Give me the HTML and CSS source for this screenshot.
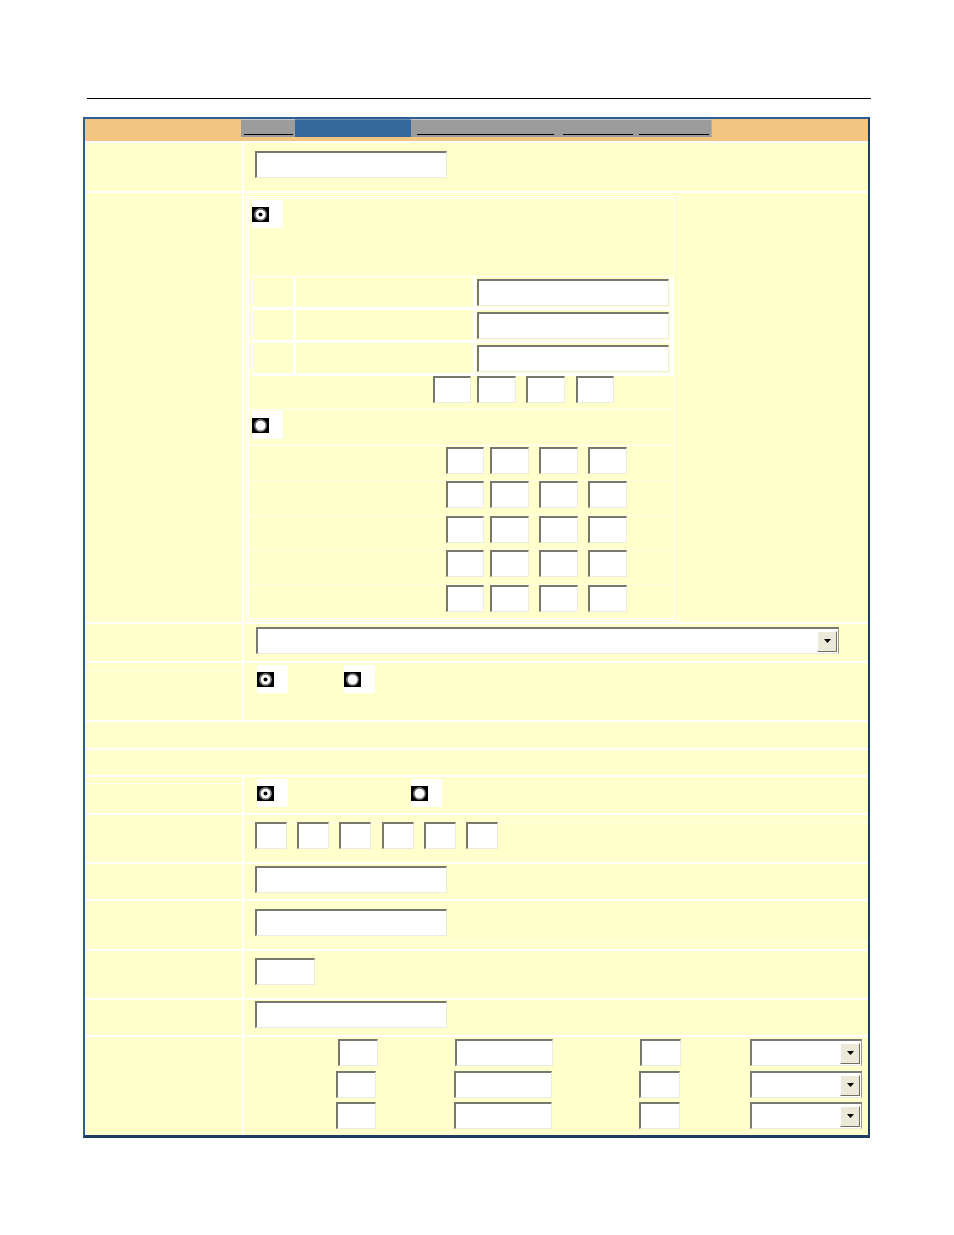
FILE: index.html
```html
<!DOCTYPE html>
<html>
<head>
<meta charset="utf-8">
<link rel="stylesheet" href="styles.css">
</head>
<body>
<div class="page">
  <div class="rule"></div>
  <div class="frame">
    <div class="head">
      <div class="tabs">
        <span class="tab t1"><i class="ul"></i></span>
        <span class="tab active"></span>
        <span class="tab t3"><i class="ul"></i></span>
        <span class="tab t4"><i class="ul"></i></span>
        <span class="tab t5"><i class="ul"></i></span>
      </div>
    </div>

    <div class="lbl"></div>
    <div class="cell c1"><input type="text" class="in w192"></div>

    <div class="lbl"></div>
    <div class="cell c2">
      <div class="nest">
        <div class="nest-in">
          <div class="n-radio-a">
            <span class="radio"><svg width="17" height="15" viewBox="0 0 17 15"><rect width="17" height="15" fill="#000"/><circle cx="8.5" cy="7.5" r="5.6" fill="#fff" stroke="#8a8a8a" stroke-width="1.5"/><path d="M4.5 11.5A5.6 5.6 0 0 1 12.5 3.5" fill="none" stroke="#6e6e6e" stroke-width="1.2"/><circle cx="8.5" cy="7.5" r="2" fill="#000"/></svg></span>
          </div>
          <div class="sub">
            <div class="sc"></div><div class="sc"></div><div class="sc"><input type="text" class="in w192"></div>
            <div class="sc"></div><div class="sc"></div><div class="sc"><input type="text" class="in w192"></div>
            <div class="sc"></div><div class="sc"></div><div class="sc"><input type="text" class="in w192"></div>
          </div>
          <div class="four">
            <input type="text" class="in w38">
            <input type="text" class="in w39">
            <input type="text" class="in w39">
            <input type="text" class="in w38">
          </div>
          <div class="n-radio-b">
            <span class="radio"><svg width="17" height="15" viewBox="0 0 17 15"><rect width="17" height="15" fill="#000"/><circle cx="8.5" cy="7.5" r="5.6" fill="#fff" stroke="#8a8a8a" stroke-width="1.5"/><path d="M4.5 11.5A5.6 5.6 0 0 1 12.5 3.5" fill="none" stroke="#6e6e6e" stroke-width="1.2"/></svg></span>
          </div>
          <div class="grid4">
            <div class="g-row"><input type="text" class="in w38"><input type="text" class="in w39"><input type="text" class="in w39"><input type="text" class="in w39"></div>
            <div class="g-row"><input type="text" class="in w38"><input type="text" class="in w39"><input type="text" class="in w39"><input type="text" class="in w39"></div>
            <div class="g-row"><input type="text" class="in w38"><input type="text" class="in w39"><input type="text" class="in w39"><input type="text" class="in w39"></div>
            <div class="g-row"><input type="text" class="in w38"><input type="text" class="in w39"><input type="text" class="in w39"><input type="text" class="in w39"></div>
            <div class="g-row"><input type="text" class="in w38"><input type="text" class="in w39"><input type="text" class="in w39"><input type="text" class="in w39"></div>
          </div>
        </div>
      </div>
    </div>

    <div class="lbl"></div>
    <div class="cell c3">
      <div class="sel w583"><span class="btn"><svg width="7" height="4" viewBox="0 0 7 4"><path d="M0 0h7L3.5 4z" fill="#000"/></svg></span></div>
    </div>

    <div class="lbl l4"></div>
    <div class="cell c4">
      <span class="radio r-a"><svg width="17" height="15" viewBox="0 0 17 15"><rect width="17" height="15" fill="#000"/><circle cx="8.5" cy="7.5" r="5.6" fill="#fff" stroke="#8a8a8a" stroke-width="1.5"/><path d="M4.5 11.5A5.6 5.6 0 0 1 12.5 3.5" fill="none" stroke="#6e6e6e" stroke-width="1.2"/><circle cx="8.5" cy="7.5" r="2" fill="#000"/></svg></span>
      <span class="radio r-b"><svg width="17" height="15" viewBox="0 0 17 15"><rect width="17" height="15" fill="#000"/><circle cx="8.5" cy="7.5" r="5.6" fill="#fff" stroke="#8a8a8a" stroke-width="1.5"/><path d="M4.5 11.5A5.6 5.6 0 0 1 12.5 3.5" fill="none" stroke="#6e6e6e" stroke-width="1.2"/></svg></span>
    </div>

    <div class="full"></div>
    <div class="full"></div>

    <div class="lbl l7"></div>
    <div class="cell c7">
      <span class="radio r-a"><svg width="17" height="15" viewBox="0 0 17 15"><rect width="17" height="15" fill="#000"/><circle cx="8.5" cy="7.5" r="5.6" fill="#fff" stroke="#8a8a8a" stroke-width="1.5"/><path d="M4.5 11.5A5.6 5.6 0 0 1 12.5 3.5" fill="none" stroke="#6e6e6e" stroke-width="1.2"/><circle cx="8.5" cy="7.5" r="2" fill="#000"/></svg></span>
      <span class="radio r-c"><svg width="17" height="15" viewBox="0 0 17 15"><rect width="17" height="15" fill="#000"/><circle cx="8.5" cy="7.5" r="5.6" fill="#fff" stroke="#8a8a8a" stroke-width="1.5"/><path d="M4.5 11.5A5.6 5.6 0 0 1 12.5 3.5" fill="none" stroke="#6e6e6e" stroke-width="1.2"/></svg></span>
    </div>

    <div class="lbl"></div>
    <div class="cell c8">
      <input type="text" class="in w32">
      <input type="text" class="in w32">
      <input type="text" class="in w32">
      <input type="text" class="in w32 nudge">
      <input type="text" class="in w32">
      <input type="text" class="in w32">
    </div>

    <div class="lbl"></div>
    <div class="cell c9"><input type="text" class="in w192"></div>

    <div class="lbl"></div>
    <div class="cell c10"><input type="text" class="in w192"></div>

    <div class="lbl"></div>
    <div class="cell c11"><input type="text" class="in w60"></div>

    <div class="lbl"></div>
    <div class="cell c12"><input type="text" class="in w192"></div>

    <div class="lbl"></div>
    <div class="cell c13">
      <div class="b-row ra">
        <input type="text" class="in w40 m1">
        <input type="text" class="in w98 m2">
        <input type="text" class="in w41 m3">
        <div class="sel w112 m4"><span class="btn"><svg width="7" height="4" viewBox="0 0 7 4"><path d="M0 0h7L3.5 4z" fill="#000"/></svg></span></div>
      </div>
      <div class="b-row rb">
        <input type="text" class="in w40 m1">
        <input type="text" class="in w98 m2">
        <input type="text" class="in w41 m3">
        <div class="sel w112 m4"><span class="btn"><svg width="7" height="4" viewBox="0 0 7 4"><path d="M0 0h7L3.5 4z" fill="#000"/></svg></span></div>
      </div>
      <div class="b-row rc">
        <input type="text" class="in w40 m1">
        <input type="text" class="in w98 m2">
        <input type="text" class="in w41 m3">
        <div class="sel w112 m4"><span class="btn"><svg width="7" height="4" viewBox="0 0 7 4"><path d="M0 0h7L3.5 4z" fill="#000"/></svg></span></div>
      </div>
    </div>
  </div>
</div>
</body>
</html>
```

FILE: styles.css
```css
html, body {
  margin: 0;
  padding: 0;
  background: #fff;
  font-family: "Liberation Sans", Arial, sans-serif;
  font-size: 13px;
}

.page {
  padding-top: 98px;
  padding-bottom: 96px;
}

.rule {
  margin-left: 87px;
  width: 784px;
  height: 1px;
  background: #000;
}

.frame {
  margin-top: 18px;
  margin-left: 83px;
  width: 787px;
  box-sizing: border-box;
  border-style: solid;
  border-width: 2px 2px 3px 2px;
  border-color: #2e5e91 #1d3d63 #1d3d63 #2e5e91;
  background: #fff;
  display: grid;
  grid-template-columns: 157px 624px;
  grid-template-rows: 22px 48px 429px 37px 57px 26px 25px 36px 47px 35px 48px 47px 35px 98px;
  gap: 2px;
}

/* header with tabs */
.head {
  grid-column: 1 / -1;
  background: #f3c580;
}

.tabs {
  display: flex;
  margin-left: 156px;
  height: 18px;
}

.tab {
  display: block;
  height: 18px;
  box-sizing: border-box;
  background: #9c9c9c;
  border-top: 1px solid #c6c6c6;
}

.tab .ul {
  display: block;
  height: 1px;
  margin-top: 14px;
  background: #000;
}

.t1 { width: 54px; }
.t1 .ul { margin-left: 3px; width: 49px; }
.active {
  width: 116px;
  background: #34679a;
  border-top-color: #6e8fb6;
}
.t3 { width: 147px; }
.t3 .ul { margin-left: 6px; width: 137px; }
.t4 { width: 78px; }
.t4 .ul { margin-left: 5px; width: 70px; }
.t5 { width: 76px; border-right: 1px solid #b0b0b0; }
.t5 .ul { margin-left: 3px; width: 70px; }

/* cells */
.lbl, .cell, .full {
  background: #ffffcc;
  box-sizing: border-box;
}

.full { grid-column: 1 / -1; }

.l4 {
  background: linear-gradient(#fffff2, #fffff2) 0 7px / 100% 1px no-repeat, #ffffcc;
}
.l7 {
  background: linear-gradient(#fffff2, #fffff2) 0 6px / 100% 1px no-repeat, #ffffcc;
}

.c1 { padding: 8px 0 0 11px; }
.c3 { padding: 3px 0 0 12px; }
.c4 { padding: 2px 0 0 13px; display: flex; align-items: flex-start; }
.c7 { padding: 2px 0 0 13px; display: flex; align-items: flex-start; }
.c8 {
  padding: 7px 0 0 11px;
  display: flex;
  align-items: flex-start;
  gap: 10px;
  background: linear-gradient(#fffff0, #fffff0) 0 7px / 100% 1px no-repeat, #ffffcc;
}
.c8 .nudge { margin-left: 1px; }
.c9 { padding: 2px 0 0 11px; }
.c10 {
  padding: 8px 0 0 11px;
  background: linear-gradient(#fffff0, #fffff0) 0 41px / 100% 1px no-repeat, #ffffcc;
}
.c11 { padding: 7px 0 0 11px; }
.c12 { padding: 1px 0 0 11px; }
.c13 { padding: 2px 0 0 0; }

.c4 .r-b { margin-left: 56px; }
.c7 .r-c { margin-left: 123px; }

/* text inputs */
.in {
  -webkit-appearance: none;
  appearance: none;
  display: block;
  box-sizing: border-box;
  height: 27px;
  margin: 0;
  padding: 0;
  background: #fff;
  border-style: solid;
  border-width: 2px 1px 1px 2px;
  border-color: #77776b #ecebe2 #ecebe2 #77776b;
  font: 13px "Liberation Sans", Arial, sans-serif;
  outline: none;
}

.w192 { width: 192px; }
.w98 { width: 98px; }
.w60 { width: 60px; }
.w41 { width: 41px; }
.w40 { width: 40px; }
.w39 { width: 39px; }
.w38 { width: 38px; }
.w32 { width: 32px; }

/* select-like control */
.sel {
  box-sizing: border-box;
  height: 27px;
  background: #fff;
  border-style: solid;
  border-width: 2px 1px 1px 2px;
  border-color: #7a7a72 #9a9a92 #ecebe2 #7a7a72;
  display: flex;
  justify-content: flex-end;
  align-items: center;
  padding-right: 1px;
}
.w583 { width: 583px; }
.w112 { width: 112px; }

.btn {
  box-sizing: border-box;
  width: 20px;
  height: 21px;
  background: #ece9d8;
  border: 1px solid;
  border-color: #fff #716f64 #716f64 #fff;
  display: flex;
  align-items: center;
  justify-content: center;
}
.btn svg { display: block; }

/* radio */
.radio {
  display: block;
  width: 31px;
  height: 28px;
  box-sizing: border-box;
  padding-top: 7px;
  background: #fff;
}
.radio svg { display: block; }

/* nested block in second row */
.nest {
  margin: 3px 0 0 2px;
  width: 434px;
  box-sizing: border-box;
  border: 1px solid #fff;
  padding: 1px 5px 1px 1px;
}

.nest-in {
  border: 1px solid #fff;
}

.n-radio-a {
  height: 77px;
  box-sizing: border-box;
  padding: 1px 0 0 3px;
}

.sub {
  margin-left: 3px;
  width: 421px;
  box-sizing: border-box;
  background: #fff;
  padding: 1px 3px 3px 1px;
  display: grid;
  grid-template-columns: 40px 177px 194px;
  grid-template-rows: 30px 30px 30px;
  gap: 3px;
}

.sc {
  background: #ffffcc;
  padding: 2px 0 0 1px;
  box-sizing: border-box;
}

.four {
  height: 33px;
  display: flex;
  align-items: flex-start;
  padding-left: 184px;
}
.four .in:nth-child(2) { margin-left: 6px; }
.four .in:nth-child(3) { margin-left: 10px; }
.four .in:nth-child(4) { margin-left: 11px; }

.n-radio-b {
  border-top: 1px solid #fff;
  height: 36px;
  box-sizing: border-box;
  padding: 1px 0 0 3px;
}

.grid4 {
  border-top: 1px solid #fff;
}

.g-row {
  height: 34px;
  box-sizing: border-box;
  padding: 1px 0 0 197px;
  display: flex;
  align-items: flex-start;
}
.g-row:nth-child(even) { height: 35px; }
.g-row + .g-row {
  background: linear-gradient(#ffffe4, #ffffe4) 0 0 / 100% 1px no-repeat;
}
.g-row .in:nth-child(2) { margin-left: 6px; }
.g-row .in:nth-child(3) { margin-left: 10px; }
.g-row .in:nth-child(4) { margin-left: 10px; }

/* last row */
.b-row {
  display: flex;
  align-items: flex-start;
}
.ra { height: 32px; }
.rb { height: 31px; }
.rc { height: 31px; }

.ra .m1 { margin-left: 94px; }
.ra .m2 { margin-left: 77px; }
.ra .m3 { margin-left: 87px; }
.ra .m4 { margin-left: 69px; }

.rb .m1, .rc .m1 { margin-left: 92px; }
.rb .m2, .rc .m2 { margin-left: 78px; }
.rb .m3, .rc .m3 { margin-left: 87px; }
.rb .m4, .rc .m4 { margin-left: 70px; }
```
